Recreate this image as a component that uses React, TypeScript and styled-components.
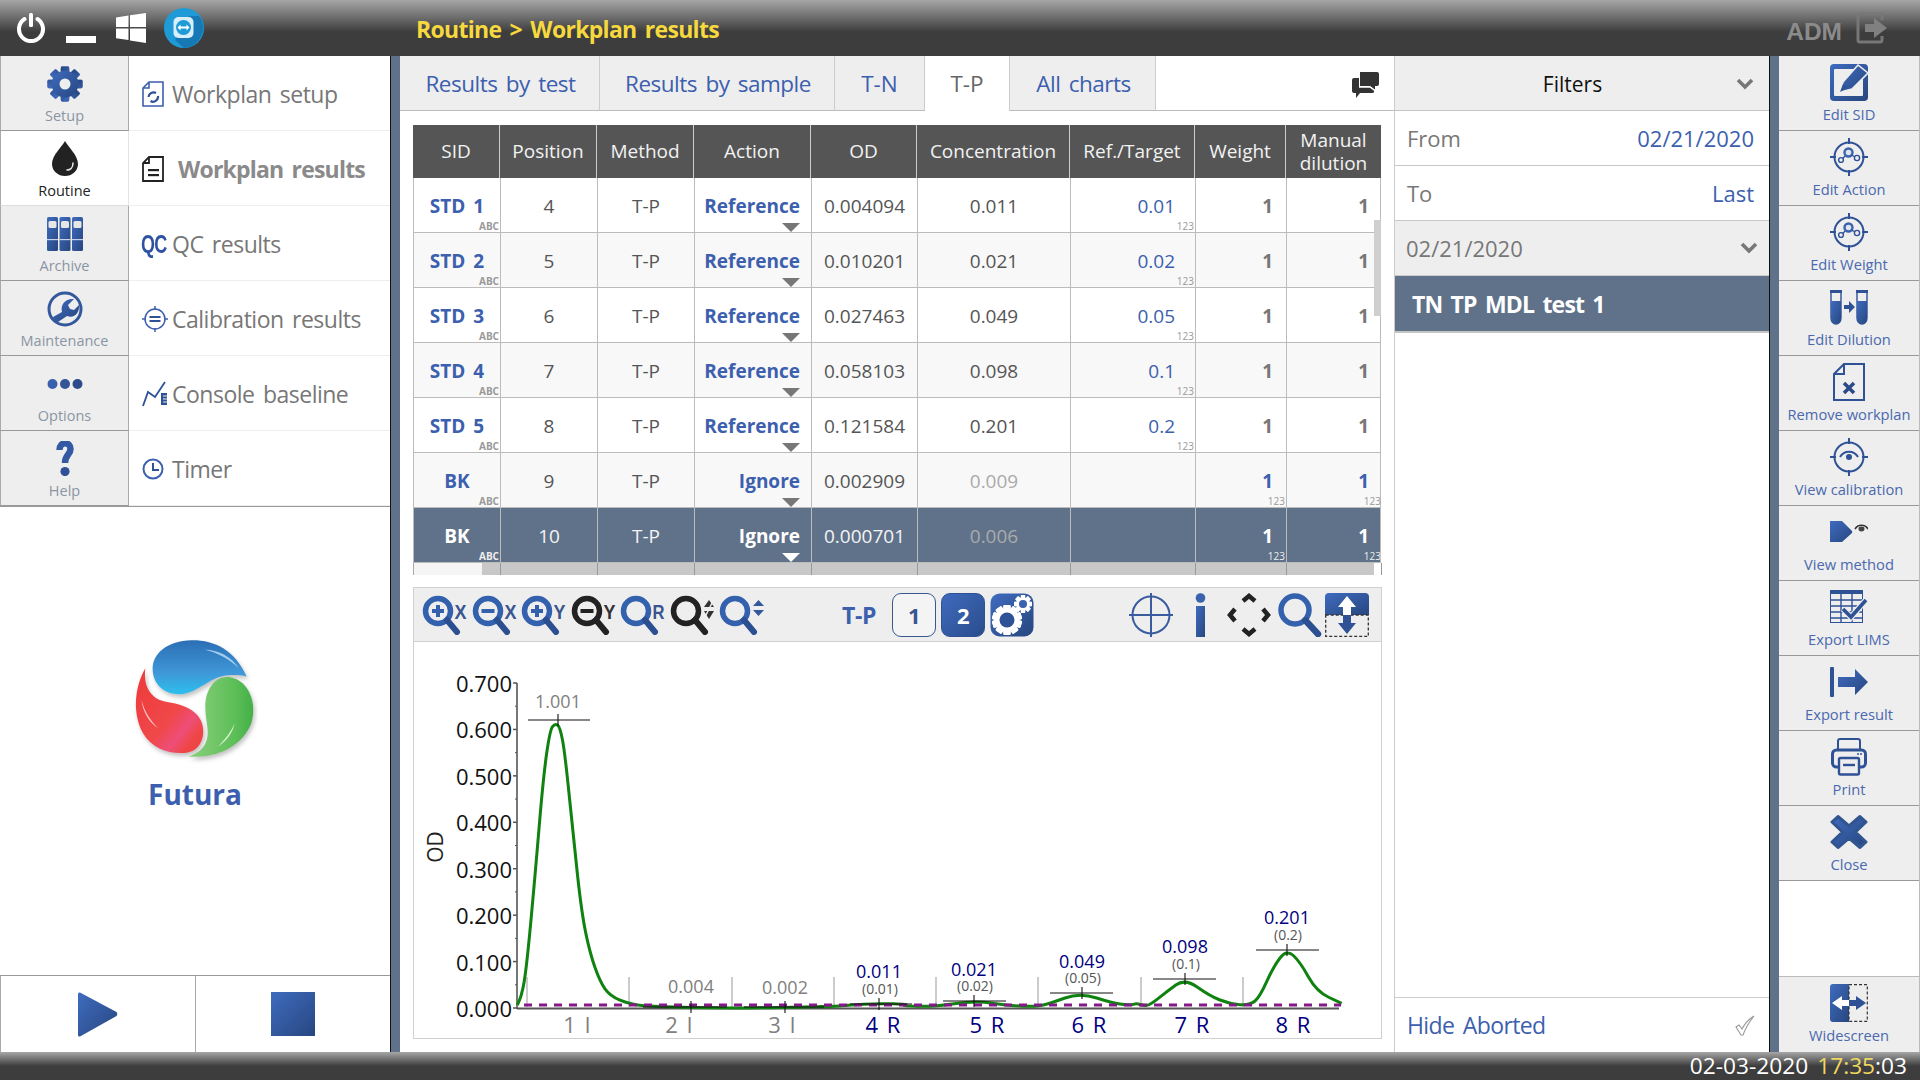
import React from "react";
import styled, { createGlobalStyle } from "styled-components";

const FONT = `"Open Sans", "Noto Sans", sans-serif`;
const BLUE = "#3c5fae";
const GRAD = "url(#blueGrad)";
const COLS = "87px 97px 97px 117px 106px 153px 125px 91px 95px";

const GlobalStyle = createGlobalStyle`
  html, body { margin: 0; padding: 0; background: #fff; }
  body { font-family: ${FONT}; }
  * { box-sizing: border-box; }
`;

const Page = styled.div`
  width: 1920px;
  height: 1080px;
  display: flex;
  flex-direction: column;
  overflow: hidden;
  position: relative;
`;

const GradDefs = styled.svg`
  position: absolute;
  width: 0;
  height: 0;
`;

const TopBar = styled.header`
  height: 56px;
  flex: none;
  display: flex;
  align-items: center;
  padding: 0 32px 0 16px;
  background: linear-gradient(#a6a6a6 0, #3d3d3d 32px, #3d3d3d 100%);
`;

const TopIcons = styled.div`
  display: flex;
  align-items: center;
  gap: 20px;
  width: 400px;
  svg:last-child { margin-left: -3px; }
`;

const Title = styled.div`
  color: #f6d83f;
  font-size: 23px;
  font-weight: 700;
  letter-spacing: -0.7px;
  word-spacing: 3px;
  flex: 1;
  margin-top: 2px;
`;

const AdmGroup = styled.div`
  display: flex;
  align-items: center;
  gap: 14px;
  color: #8b8b8b;
  font: 700 24.5px "Liberation Sans", sans-serif;
`;

const AdmLabel = styled.span`
  margin-top: 7px;
`;

const Body = styled.div`
  flex: 1;
  min-height: 0;
  display: flex;
`;

const LeftPane = styled.aside`
  width: 390px;
  flex: none;
  display: flex;
  flex-direction: column;
`;

const NavGrid = styled.nav`
  display: grid;
  grid-template-columns: 129px 261px;
  grid-auto-rows: 75px;
  border-bottom: 1px solid #999;
`;

const NavTab = styled.div<{ $active?: boolean }>`
  display: flex;
  flex-direction: column;
  align-items: center;
  background: ${(p) => (p.$active ? "#fff" : "#eee")};
  border: 1px solid #aaa;
  border-width: 0 1px 1px 1px;
  border-bottom-color: ${(p) => (p.$active ? "#ddd" : "#999")};
  border-right-color: ${(p) => (p.$active ? "#e4e4e4" : "#aaa")};
  color: ${(p) => (p.$active ? "#222" : "#8a95a3")};
  font-size: 14.5px;
`;

const NavIconSlot = styled.div`
  height: 45px;
  display: flex;
  align-items: center;
  justify-content: center;
  margin-top: 5px;
`;

const NavLabel = styled.span`
  line-height: 20px;
`;

const SubItem = styled.div<{ $active?: boolean }>`
  display: flex;
  align-items: center;
  padding: 2px 0 0 14px;
  border-bottom: 1px solid #eee;
  color: ${(p) => (p.$active ? "#8a8a8a" : "#777")};
  font-size: 23px;
  font-weight: ${(p) => (p.$active ? 700 : 400)};
  letter-spacing: ${(p) => (p.$active ? "-0.8px" : "-0.5px")};
  word-spacing: 3px;
`;

const SubIcon = styled.span<{ $active?: boolean }>`
  width: ${(p) => (p.$active ? "36px" : "30px")};
  flex: none;
  display: flex;
  align-items: center;
  margin-left: -1px;
`;

const QcMark = styled.span`
  font: 700 25px "Liberation Sans", sans-serif;
  letter-spacing: -1px;
  color: #2f52a0;
  transform: scaleX(0.72);
  transform-origin: left center;
  margin-left: -1px;
`;

const Brand = styled.div`
  flex: 1;
  display: flex;
  flex-direction: column;
  align-items: center;
  padding-top: 131px;
  color: ${BLUE};
  font-size: 28px;
  font-weight: 700;
`;

const BrandName = styled.div`
  margin-top: 10px;
`;

const RunBar = styled.div`
  height: 77px;
  flex: none;
  display: grid;
  grid-template-columns: 195px 195px;
  border-top: 1px solid #999;
`;

const RunButton = styled.div`
  display: flex;
  align-items: flex-start;
  justify-content: center;
  padding-top: 16px;
  border-left: 1px solid #aaa;
`;

const Divider = styled.div`
  width: 10px;
  flex: none;
  background: #5f728a;
  border-left: 1px solid #111;
`;

const Main = styled.main`
  width: 995px;
  flex: none;
  display: flex;
  flex-direction: column;
  border-right: 1px solid #ccc;
`;

const Tabs = styled.div`
  height: 55px;
  flex: none;
  display: flex;
  align-items: stretch;
`;

const Tab = styled.div<{ $w: number; $active?: boolean; $short?: boolean }>`
  width: ${(p) => p.$w}px;
  display: flex;
  align-items: center;
  justify-content: center;
  font-size: 22.5px;
  letter-spacing: ${(p) => (p.$short ? "0" : "-0.5px")};
  word-spacing: 3px;
  padding-left: ${(p) => (p.$short ? "0" : "2px")};
  color: ${(p) => (p.$active ? "#666" : BLUE)};
  background: ${(p) => (p.$active ? "#fff" : "#eee")};
  border-right: 1px solid #ccc;
  border-bottom: ${(p) => (p.$active ? "none" : "1px solid #bbb")};
`;

const TabFill = styled.div`
  flex: 1;
  display: flex;
  align-items: center;
  justify-content: flex-end;
  padding: 4px 15px 0 0;
  border-bottom: 1px solid #bbb;
`;

const Content = styled.div`
  flex: 1;
  min-height: 0;
  display: flex;
  flex-direction: column;
  padding: 14px 13px 13px 13px;
`;

const ResultTable = styled.div`
  position: relative;
  width: 968px;
  flex: none;
`;

const HeadRow = styled.div`
  display: grid;
  grid-template-columns: ${COLS};
  height: 53px;
  background: #555;
`;

const HeadCell = styled.div`
  display: flex;
  align-items: center;
  justify-content: center;
  text-align: center;
  color: #f2f2f2;
  font-size: 19px;
  line-height: 23px;
  border-right: 1px solid #ccc;
  &:last-child { border-right: none; }
`;

const Row = styled.div<{ $selected?: boolean; $alt?: boolean }>`
  display: grid;
  grid-template-columns: ${COLS};
  height: 55px;
  font-size: 19px;
  background: ${(p) => (p.$selected ? "#5f728a" : p.$alt ? "#f8f8f8" : "#fff")};
  color: ${(p) => (p.$selected ? "#f4f4f4" : "#555")};
  border-bottom: 1px solid #bcbcbc;
  border-left: 1px solid #bcbcbc;
  border-right: 1px solid #bcbcbc;
`;

const Cell = styled.div<{ $align?: string; $pad?: number; $tone?: string; $bold?: boolean }>`
  position: relative;
  display: flex;
  align-items: center;
  justify-content: ${(p) => p.$align || "center"};
  padding: 2px ${(p) => p.$pad || 0}px 0 ${(p) => p.$pad || 0}px;
  border-right: 1px solid #bcbcbc;
  color: ${(p) => p.$tone || "inherit"};
  font-weight: ${(p) => (p.$bold ? 700 : 400)};
  word-spacing: 3px;
  &:last-child { border-right: none; }
`;

const CornerTag = styled.span<{ $bold?: boolean; $tone?: string }>`
  position: absolute;
  right: 1px;
  bottom: 0;
  font-size: 10px;
  line-height: 11px;
  font-weight: ${(p) => (p.$bold ? 700 : 400)};
  color: ${(p) => p.$tone || "#999"};
`;

const DropCaret = styled.span<{ $tone?: string }>`
  position: absolute;
  right: 11px;
  bottom: 0;
  width: 0;
  height: 0;
  border-left: 9px solid transparent;
  border-right: 9px solid transparent;
  border-top: 9px solid ${(p) => p.$tone || "#777"};
`;

const VScrollThumb = styled.div`
  position: absolute;
  top: 95px;
  right: 0;
  width: 7px;
  height: 96px;
  background: #cfcfcf;
`;

const HScroll = styled.div`
  position: relative;
  display: grid;
  grid-template-columns: ${COLS};
  height: 12px;
  width: 968px;
  background: #c8c8c8;
  border-left: 1px solid #aaa;
  flex: none;
`;

const HScrollCell = styled.div`
  border-right: 1px solid #999;
  &:last-child { border-right: none; }
`;

const HThumb = styled.div`
  position: absolute;
  left: 0;
  top: 0;
  width: 68px;
  height: 12px;
  background: #f5f5f5;
`;

const HCorner = styled.div`
  position: absolute;
  right: 0;
  top: 0;
  width: 7px;
  height: 12px;
  background: #fff;
`;

const ChartTools = styled.div`
  margin-top: 12px;
  height: 55px;
  flex: none;
  width: 969px;
  display: flex;
  align-items: center;
  padding-left: 8px;
  background: #eee;
  border: 1px solid #d0d0d0;
`;

const ToolGroup = styled.div<{ $gap: number; $ml?: number }>`
  display: flex;
  align-items: center;
  gap: ${(p) => p.$gap}px;
  margin-left: ${(p) => p.$ml || 0}px;
`;

const ToolSlot = styled.div<{ $ml: number }>`
  display: flex;
  margin-left: ${(p) => p.$ml}px;
`;

const SeriesName = styled.span`
  color: ${BLUE};
  font-size: 23px;
  font-weight: 700;
  letter-spacing: -0.3px;
  margin-right: 11px;
`;

const SeriesButton = styled.div<{ $on?: boolean }>`
  width: 44px;
  height: 44px;
  display: flex;
  align-items: center;
  justify-content: center;
  border-radius: 9px;
  font-size: 22px;
  font-weight: 700;
  color: ${(p) => (p.$on ? "#fff" : "#37568f")};
  background: ${(p) => (p.$on ? "linear-gradient(135deg, #3f6bbd, #2a4c8c)" : "#f4f4f4")};
  border: 1px solid ${(p) => (p.$on ? "#2f5296" : "#38588f")};
`;

const ChartBox = styled.div`
  flex: none;
  width: 969px;
  height: 397px;
  border: 1px solid #d0d0d0;
  border-top: none;
  background: #fff;
`;

const ChartSvg = styled.svg`
  display: block;
  width: 967px;
  height: 396px;
`;

const FilterPane = styled.section`
  width: 374px;
  flex: none;
  display: flex;
  flex-direction: column;
`;

const FilterHead = styled.div`
  height: 55px;
  flex: none;
  display: flex;
  align-items: center;
  padding: 2px 15px 0 0;
  background: #eee;
  border-bottom: 1px solid #c4c4c4;
  color: #111;
  font-size: 21px;
`;

const FilterTitle = styled.span`
  flex: 1;
  text-align: center;
  padding-left: 14px;
`;

const FilterRow = styled.div`
  height: 55px;
  flex: none;
  display: flex;
  align-items: center;
  justify-content: space-between;
  padding: 0 15px 0 12px;
  border-bottom: 1px solid #c8c8c8;
  color: #777;
  font-size: 22px;
`;

const FilterValue = styled.span`
  color: ${BLUE};
`;

const DateSelect = styled.div`
  height: 55px;
  flex: none;
  display: flex;
  align-items: center;
  justify-content: space-between;
  padding: 0 11px 0 11px;
  background: #eee;
  color: #777;
  font-size: 22px;
  border-bottom: 1px solid #ccc;
`;

const PlanItem = styled.div`
  height: 57px;
  flex: none;
  display: flex;
  align-items: center;
  padding: 0 0 0 17px;
  background: #5f728a;
  border-bottom: 2px solid #c4c4c4;
  color: #fff;
  font-size: 23px;
  font-weight: 700;
  letter-spacing: -0.8px;
  word-spacing: 3px;
`;

const FilterSpacer = styled.div`
  flex: 1;
`;

const HideRow = styled.div`
  height: 55px;
  flex: none;
  display: flex;
  align-items: center;
  justify-content: space-between;
  padding: 0 14px 0 12px;
  border-top: 1px solid #ccc;
  color: ${BLUE};
  font-size: 23px;
  letter-spacing: -0.6px;
  word-spacing: 3px;
`;

const RightRail = styled.aside`
  flex: 1;
  display: flex;
  flex-direction: column;
  border-right: 1px solid #bbb;
`;

const RailButton = styled.div`
  height: 75px;
  flex: none;
  display: flex;
  flex-direction: column;
  align-items: center;
  background: #eee;
  border-bottom: 1px solid #999;
  color: #4a69ae;
  font-size: 14.7px;
`;

const RailIcon = styled.div`
  height: 44px;
  display: flex;
  align-items: center;
  justify-content: center;
  margin-top: 4px;
`;

const RailLabel = styled.span`
  line-height: 20px;
`;

const RailSpacer = styled.div`
  flex: 1;
`;

const WideButton = styled(RailButton)`
  height: 76px;
  border-bottom: none;
  border-top: 1px solid #bbb;
`;

const BottomBar = styled.footer`
  height: 28px;
  flex: none;
  display: flex;
  align-items: center;
  justify-content: flex-end;
  padding: 0 13px 1px 0;
  background: linear-gradient(#a6a6a6 0, #3d3d3d 14px, #3d3d3d 100%);
  color: #fff;
  font-size: 22.7px;
  line-height: 24px;
`;

const Clock = styled.span`
  color: #f0d860;
  margin-left: 9px;
`;

/* top bar icons */
const PowerIcon = () => (
  <svg width="30" height="30" viewBox="0 0 30 30">
    <path d="M8.5 6 A12 12 0 1 0 21.5 6" fill="none" stroke="#fff" strokeWidth="4" strokeLinecap="round" />
    <rect x="13" y="0" width="4" height="14" rx="1.5" fill="#fff" />
  </svg>
);

const MinimizeIcon = () => (
  <svg width="30" height="30" viewBox="0 0 30 30">
    <rect x="0" y="23" width="30" height="7" fill="#fff" />
  </svg>
);

const WindowsIcon = () => (
  <svg width="30" height="30" viewBox="0 0 30 30">
    <path d="M0 4.5 L12.5 2.5 V14 H0 Z M14 2.2 L30 0 V14 H14 Z M0 15.5 H12.5 V27 L0 25.2 Z M14 15.5 H30 V30 L14 27.4 Z" fill="#fff" />
  </svg>
);

const TeamViewerIcon = () => (
  <svg width="42" height="42" viewBox="0 0 42 42">
    <circle cx="21" cy="21" r="20" fill="#1e9bd7" />
    <path d="M26 9 H36 A20 20 0 0 1 21 41 L12 33 Z" fill="#1678b4" />
    <rect x="10.5" y="10" width="20" height="21" rx="5" fill="#d8eefa" />
    <circle cx="20.5" cy="20.5" r="7.5" fill="#1e9bd7" />
    <path d="M14.5 20.5 L17.5 17.5 V19.5 H23.5 V17.5 L26.5 20.5 L23.5 23.5 V21.5 H17.5 V23.5 Z" fill="#fff" />
  </svg>
);

const ExitIcon = () => (
  <svg width="32" height="32" viewBox="0 0 32 32">
    <path d="M26 8 V4 A2 2 0 0 0 24 2 H4 A2 2 0 0 0 2 4 V28 A2 2 0 0 0 4 30 H24 A2 2 0 0 0 26 28 V24" fill="none" stroke="#777" strokeWidth="3" />
    <path d="M9 12 H18 V6 L31 16 L18 26 V20 H9 Z" fill="#808080" />
  </svg>
);

/* left nav */
const GearShape = ({ cx, cy, r, hole, fill, teeth = 8 }: { cx: number; cy: number; r: number; hole: number; fill: string; teeth?: number }) => (
  <g fill={fill}>
    {Array.from({ length: teeth }).map((_, i) => (
      <rect key={i} x={cx - r * 0.24} y={cy - r} width={r * 0.48} height={r * 2} rx={r * 0.08} transform={`rotate(${(i * 360) / teeth} ${cx} ${cy})`} />
    ))}
    <circle cx={cx} cy={cy} r={r * 0.76} />
    <circle cx={cx} cy={cy} r={hole} fill="#eee" />
  </g>
);

const SetupIcon = () => (
  <svg width="36" height="36" viewBox="0 0 36 36">
    <GearShape cx={18} cy={18} r={17.5} hole={5.5} fill={GRAD} />
  </svg>
);

const DropIcon = () => (
  <svg width="26" height="35" viewBox="0 0 26 35">
    <path d="M13 0 C16 6 26 14 26 23 A13 12 0 0 1 0 23 C0 14 10 6 13 0 Z" fill="#222" />
    <path d="M21 22 C21 27 18 29 15 29" fill="none" stroke="#eee" strokeWidth="1.5" strokeLinecap="round" />
  </svg>
);

const ArchiveIcon = () => (
  <svg width="36" height="34" viewBox="0 0 36 34">
    {[0, 12.5, 25].map((x) => (
      <g key={x}>
        <rect x={x} y="0" width="11" height="34" rx="1.5" fill={GRAD} />
        <rect x={x + 1.5} y="4" width="8" height="7" rx="1.5" fill="#e6e6e6" />
        <rect x={x} y="22" width="11" height="1.2" fill="#c8d2e6" />
      </g>
    ))}
  </svg>
);

const WrenchIcon = () => (
  <svg width="36" height="36" viewBox="0 0 36 36">
    <circle cx="18" cy="18" r="16" fill="none" stroke="#34589c" strokeWidth="3" />
    <path d="M6 26 L15 21 C13 13 19 7 27 8 L21 14 L23 18 L27 19 L32 14 C33 22 27 28 20 25 L11 31 C8 30 7 28 6 26 Z" fill={GRAD} />
  </svg>
);

const DotsIcon = () => (
  <svg width="36" height="12" viewBox="0 0 36 12">
    <circle cx="5.5" cy="6" r="5" fill="#3a60ad" />
    <circle cx="18" cy="6" r="5" fill="#345597" />
    <circle cx="30.5" cy="6" r="5" fill="#2c4b8a" />
  </svg>
);

const HelpIcon = () => (
  <svg width="18" height="35" viewBox="0 0 18 35">
    <path d="M3.5 9 C3.5 0 14.5 0.5 14.5 8 C14.5 13.5 9 14 9 22" fill="none" stroke="#3359a3" strokeWidth="6.5" />
    <circle cx="9" cy="30.5" r="4.6" fill="#2f5296" />
  </svg>
);

const SetupDocIcon = () => (
  <svg width="22" height="26" viewBox="0 0 22 26">
    <path d="M7 1 H21 V25 H1 V7 Z M7 1 V7 H1" fill="#fff" stroke="#3c5fae" strokeWidth="1.6" />
    <path d="M6.5 16 A5 5 0 0 1 14 12 M16 15 A5 5 0 0 1 8.5 20" fill="none" stroke="#2f5296" strokeWidth="2.2" />
  </svg>
);

const ResultDocIcon = () => (
  <svg width="22" height="26" viewBox="0 0 22 26">
    <path d="M7 1 H21 V25 H1 V7 Z M7 1 V7 H1" fill="#fff" stroke="#222" strokeWidth="1.8" />
    <rect x="6" y="13" width="11" height="2.2" fill="#222" />
    <rect x="6" y="18" width="11" height="2.2" fill="#222" />
  </svg>
);

const CalibrationIcon = () => (
  <svg width="26" height="26" viewBox="0 0 26 26">
    <circle cx="13" cy="13" r="10" fill="none" stroke="#3c5fae" strokeWidth="1.5" />
    <path d="M13 0 V4 M13 22 V26 M0 13 H4 M22 13 H26" stroke="#3c5fae" strokeWidth="1.5" />
    <rect x="7.5" y="10" width="11" height="2" fill="#2f5296" />
    <rect x="7.5" y="14" width="11" height="2" fill="#2f5296" />
  </svg>
);

const BaselineIcon = () => (
  <svg width="26" height="26" viewBox="0 0 26 26">
    <path d="M1 25 L6 11 L13 16 L23 1" fill="none" stroke="#2f5296" strokeWidth="1.8" />
    <rect x="19" y="12" width="6" height="12" fill="#2f5296" />
    <path d="M21 15 H25 M21 18 H25 M21 21 H25" stroke="#eee" strokeWidth="1" />
  </svg>
);

const ClockIcon = () => (
  <svg width="22" height="22" viewBox="0 0 22 22">
    <circle cx="11" cy="11" r="9.5" fill="none" stroke="#3c5fae" strokeWidth="2" />
    <path d="M11 5 V12 H17" fill="none" stroke="#2f5296" strokeWidth="2" />
  </svg>
);

const FuturaLogo = () => (
  <svg width="125" height="127" viewBox="395 115 375 380">
    <defs>
      <linearGradient id="lgBlue" x1="0" y1="0" x2="0" y2="1">
        <stop offset="0" stopColor="#2b6eb4" />
        <stop offset="0.6" stopColor="#3f97d8" />
        <stop offset="1" stopColor="#2cc0ee" />
      </linearGradient>
      <linearGradient id="lgRed" x1="0" y1="0" x2="1" y2="1">
        <stop offset="0" stopColor="#ee3a3a" />
        <stop offset="0.55" stopColor="#f0474a" />
        <stop offset="0.72" stopColor="#ee4f78" />
        <stop offset="0.85" stopColor="#f04545" />
      </linearGradient>
      <linearGradient id="lgGreen" x1="0" y1="0" x2="1" y2="0">
        <stop offset="0" stopColor="#8ccf7e" />
        <stop offset="0.7" stopColor="#5ebf58" />
        <stop offset="1" stopColor="#44b048" />
      </linearGradient>
      <filter id="lgShadow" x="-10%" y="-10%" width="125%" height="125%">
        <feDropShadow dx="5" dy="9" stdDeviation="6" floodColor="#777" floodOpacity="0.45" />
      </filter>
    </defs>
    <g filter="url(#lgShadow)">
      <path d="M736 230 C700 150 640 120 570 121 C500 122 452 160 454 210 C456 262 500 287 540 283 C590 278 630 228 680 226 C705 225 722 226 736 230 Z" fill="url(#lgBlue)" />
      <path d="M432 205 C400 260 392 340 425 400 C455 450 510 465 560 458 C600 450 615 405 600 365 C582 322 530 312 490 305 C450 295 425 262 432 205 Z" fill="url(#lgRed)" />
      <path d="M562 470 C640 475 720 445 750 370 C768 315 745 240 685 232 C640 228 612 270 612 320 C612 370 630 400 610 435 C600 452 585 462 562 470 Z" fill="url(#lgGreen)" />
    </g>
    <path d="M610 150 C650 150 690 170 712 205 C680 175 650 160 610 150 Z" fill="#bfe0f6" opacity="0.8" />
    <path d="M420 300 C425 335 440 365 470 385 C445 360 430 335 420 300 Z" fill="#ffd6d6" opacity="0.9" />
    <path d="M650 440 C680 420 695 395 700 370 C690 395 670 420 650 440 Z" fill="#e6f7e0" opacity="0.9" />
  </svg>
);

const PlayIcon = () => (
  <svg width="40" height="45" viewBox="0 0 40 45">
    <path d="M2 0.5 L38.5 20 Q40 22 38.5 24 L2 44.5 Q0 45 0 43 V2 Q0 0 2 0.5 Z" fill={GRAD} />
  </svg>
);

const StopIcon = () => (
  <svg width="44" height="44" viewBox="0 0 44 44">
    <rect width="44" height="44" fill={GRAD} />
  </svg>
);

const ChatIcon = () => (
  <svg width="27" height="27" viewBox="0 0 27 27">
    <path d="M8 0 H25 Q27 0 27 2 V12 Q27 14 25 14 H23 V18 L18 14 H8 Z" fill="#333" />
    <path d="M2 6 H7 V15 H18 L22 18 V20 Q22 21 20 21 H8 L4 26 V21 H2 Q0 21 0 19 V8 Q0 6 2 6 Z" fill="#333" />
    <path d="M7 15 H18 L23 18.6" fill="none" stroke="#fff" strokeWidth="1.4" />
  </svg>
);

/* chart toolbar */
const ZoomIcon = ({ mark, letter, dark }: { mark?: "+" | "-"; letter?: string; dark?: boolean }) => {
  const c = dark ? "#222" : "#3461ad";
  return (
    <svg width="46" height="40" viewBox="0 0 46 40">
      <circle cx="16" cy="16" r="12.5" fill="#eee" stroke={c} strokeWidth="5.5" />
      <path d="M25 25 L35 37" stroke={dark ? "#222" : "#2b4f90"} strokeWidth="6" strokeLinecap="round" />
      {mark === "+" && <path d="M10 16 H22 M16 10 V22" stroke={c} strokeWidth="4" />}
      {mark === "-" && <path d="M9.5 16 H22.5" stroke={c} strokeWidth="4" />}
      {letter && (
        <text x="38.5" y="24" textAnchor="middle" fontSize="20" fontWeight="700" fontFamily={'"Liberation Sans", sans-serif'} fill={dark ? "#333" : "#3a5590"} textLength="12" lengthAdjust="spacingAndGlyphs">
          {letter}
        </text>
      )}
    </svg>
  );
};

const LinkedZoomIcon = () => (
  <svg width="46" height="40" viewBox="0 0 46 40">
    <circle cx="16" cy="16" r="12.5" fill="#eee" stroke="#222" strokeWidth="5.5" />
    <path d="M25 25 L35 37" stroke="#222" strokeWidth="6" strokeLinecap="round" />
    <path d="M34 12 L39 5 L44 12 Z M34 16 L44 16 L39 24 Z" fill="#333" />
    <path d="M35 22 L44 4" stroke="#eee" strokeWidth="1.5" />
  </svg>
);

const SortZoomIcon = () => (
  <svg width="46" height="40" viewBox="0 0 46 40">
    <circle cx="16" cy="16" r="12.5" fill="#eee" stroke="#3461ad" strokeWidth="5.5" />
    <path d="M25 25 L35 37" stroke="#2b4f90" strokeWidth="6" strokeLinecap="round" />
    <path d="M34 11 L39.5 5 L45 11 Z M34 15 L45 15 L39.5 21 Z" fill="#34589c" />
  </svg>
);

const GearsButton = () => (
  <svg width="44" height="44" viewBox="0 0 44 44">
    <rect x="0.5" y="0.5" width="43" height="43" rx="9" fill={GRAD} />
    <g>
      <GearShape cx={17} cy={27} r={15} hole={7.5} fill="#fff" teeth={10} />
      <circle cx={17} cy={27} r={7.5} fill="#2f5296" />
      <GearShape cx={33} cy={11} r={9} hole={4} fill="#fff" teeth={8} />
      <circle cx={33} cy={11} r={4} fill="#3a62ad" />
    </g>
  </svg>
);

const CrosshairIcon = () => (
  <svg width="44" height="44" viewBox="0 0 44 44">
    <circle cx="22" cy="22" r="18.5" fill="none" stroke="#3a5c9f" strokeWidth="2" />
    <path d="M22 0 V44 M0 22 H44" stroke="#3a5c9f" strokeWidth="2" />
  </svg>
);

const InfoIcon = () => (
  <svg width="11" height="44" viewBox="0 0 11 44">
    <circle cx="5.5" cy="5" r="4.8" fill="#3a62ad" />
    <rect x="1" y="13" width="9" height="31" fill={GRAD} />
  </svg>
);

const PanIcon = () => (
  <svg width="44" height="44" viewBox="0 0 44 44">
    <path d="M16 8 L22 3 L28 8 M16 36 L22 41 L28 36 M8 16 L3 22 L8 28 M36 16 L41 22 L36 28" fill="none" stroke="#222" strokeWidth="4.5" />
  </svg>
);

const SearchIcon = () => (
  <svg width="44" height="44" viewBox="0 0 44 44">
    <circle cx="17" cy="17" r="14" fill="#eee" stroke="#3461ad" strokeWidth="5.5" />
    <path d="M27.5 27.5 L40 41" stroke="#2b4f90" strokeWidth="6.5" strokeLinecap="round" />
  </svg>
);

const ExpandIcon = () => (
  <svg width="44" height="44" viewBox="0 0 44 44">
    <path d="M4 0 H40 Q44 0 44 4 V22 H0 V4 Q0 0 4 0 Z" fill={GRAD} />
    <rect x="0.7" y="22" width="42.6" height="21.3" fill="none" stroke="#333" strokeWidth="1.3" strokeDasharray="3 2" />
    <path d="M22 3 L31 14 H26 V22 H18 V14 H13 Z" fill="#fff" />
    <path d="M22 41 L31 30 H26 V22 H18 V30 H13 Z" fill="#2f5296" />
  </svg>
);

/* right rail */
const EditSidIcon = () => (
  <svg width="38" height="38" viewBox="0 0 38 38">
    <rect x="0" y="1" width="38" height="37" rx="4" fill={GRAD} />
    <rect x="4" y="6" width="29" height="27" rx="1" fill="#eee" />
    <path d="M10 29 L13 19 L28 2 L38 10 L22 26 Z" fill={GRAD} stroke="#eee" strokeWidth="1.6" />
    <path d="M10 29 L13 21 L18 25 Z" fill="#2f5296" />
  </svg>
);

const TargetRing = () => (
  <>
    <circle cx="19" cy="19" r="14.5" fill="none" stroke="#2f5296" strokeWidth="2" />
    <path d="M19 0 V6 M19 32 V38 M0 19 H6 M32 19 H38" stroke="#2f5296" strokeWidth="2" />
  </>
);

const EditTargetIcon = () => (
  <svg width="38" height="38" viewBox="0 0 38 38">
    <TargetRing />
    <circle cx="18.5" cy="14.5" r="4" fill="#dfe5ee" stroke="#3a62ad" strokeWidth="2.4" />
    <circle cx="27" cy="20" r="2.6" fill="none" stroke="#2f5296" strokeWidth="1.4" />
    <circle cx="11" cy="22" r="2.4" fill="none" stroke="#2f5296" strokeWidth="1.4" />
    <path d="M21.5 17 L25 19 M15 18 L12.8 20.5" stroke="#2f5296" strokeWidth="1.3" />
  </svg>
);

const Tube = ({ x }: { x: number }) => (
  <g>
    <rect x={x} y="0" width="12" height="3" fill="#2f5296" />
    <path d={`M${x + 1} 3 V28 A5 6 0 0 0 ${x + 11} 28 V3`} fill="#eee" stroke="#2f5296" strokeWidth="1.4" />
    <path d={`M${x + 1} 11 H${x + 11} V28 A5 6 0 0 1 ${x + 1} 28 Z`} fill={GRAD} />
  </g>
);

const DilutionIcon = () => (
  <svg width="38" height="35" viewBox="0 0 38 35">
    <Tube x={0} />
    <Tube x={26} />
    <path d="M14 15 H19 V11 L25 17 L19 23 V19 H14 Z" fill="#2f5296" />
  </svg>
);

const RemoveDocIcon = () => (
  <svg width="32" height="38" viewBox="0 0 32 38">
    <path d="M11 1 H31 V37 H1 V11 Z M11 1 V11 H1" fill="#eee" stroke="#2f5296" strokeWidth="2" />
    <path d="M11 20 L21 30 M21 20 L11 30" stroke="#2a4a88" strokeWidth="3.5" />
  </svg>
);

const EyeTargetIcon = () => (
  <svg width="38" height="38" viewBox="0 0 38 38">
    <TargetRing />
    <path d="M10 19 C14 12 24 12 28 19" fill="none" stroke="#2f5296" strokeWidth="2" />
    <circle cx="19" cy="19" r="3" fill="#2f5296" />
  </svg>
);

const MethodIcon = () => (
  <svg width="38" height="22" viewBox="0 0 38 22">
    <path d="M0 0 H12 L22 10 Q22.5 11 22 12 L12 21 H0 Z" fill={GRAD} />
    <path d="M25 8 C28 3 35 3 38 8" fill="none" stroke="#333" strokeWidth="1.6" />
    <ellipse cx="31.5" cy="8" rx="3" ry="2.4" fill="#444" />
  </svg>
);

const LimsIcon = () => (
  <svg width="38" height="34" viewBox="0 0 38 34">
    <rect x="0.5" y="0.5" width="32" height="32" fill="#eee" stroke="#2f5296" />
    <rect x="0" y="0" width="33" height="4" fill="#2f5296" />
    <path d="M0 10 H33 M0 16 H33 M0 22 H33 M0 28 H33 M11 0 V33 M22 0 V33" stroke="#2f5296" strokeWidth="1.4" />
    <path d="M13 19 L21 27 L36 10" fill="none" stroke="#eee" strokeWidth="6" />
    <path d="M13 19 L21 27 L36 10" fill="none" stroke="#2f5296" strokeWidth="3.6" />
  </svg>
);

const ExportIcon = () => (
  <svg width="38" height="30" viewBox="0 0 38 30">
    <rect x="0" y="0" width="4" height="30" rx="1" fill="#2f5296" />
    <path d="M8 10 H25 V2 L38 15 L25 28 V20 H8 Z" fill={GRAD} />
  </svg>
);

const PrintIcon = () => (
  <svg width="36" height="38" viewBox="0 0 36 38">
    <path d="M7 12 V3 Q7 1 9 1 H27 Q29 1 29 3 V12" fill="#eee" stroke="#2f5296" strokeWidth="2" />
    <rect x="1.5" y="12" width="33" height="17" rx="4" fill="#eee" stroke="#2f5296" strokeWidth="3" />
    <rect x="8" y="20" width="20" height="16.5" rx="1.5" fill="#eee" stroke="#2f5296" strokeWidth="2.4" />
    <path d="M12 27 H24" stroke="#2f5296" strokeWidth="2.4" />
    <circle cx="27" cy="16" r="1" fill="#2f5296" />
    <circle cx="30" cy="16" r="1" fill="#2f5296" />
  </svg>
);

const CloseIcon = () => (
  <svg width="38" height="36" viewBox="0 0 38 36">
    <path d="M8 2.5 L19 12 L30 2.5 L36 8 L25.5 18 L36 28 L30 33.5 L19 24 L8 33.5 L2 28 L12.5 18 L2 8 Z" fill={GRAD} stroke="#31558f" strokeWidth="3" strokeLinejoin="round" />
  </svg>
);

const WideIcon = () => (
  <svg width="38" height="38" viewBox="0 0 38 38">
    <path d="M3 0 H19 V38 H3 Q0 38 0 35 V3 Q0 0 3 0 Z" fill={GRAD} />
    <rect x="19" y="0.7" width="18.3" height="36.6" fill="none" stroke="#333" strokeWidth="1.2" strokeDasharray="3 2" />
    <path d="M2 19 L12 12 V16 H19 V22 H12 V26 Z" fill="#fff" />
    <path d="M36 19 L26 12 V16 H19 V22 H26 V26 Z" fill="#2f5296" />
  </svg>
);

const Chevron = () => (
  <svg width="18" height="12" viewBox="0 0 18 12">
    <path d="M2 2 L9 9 L16 2" fill="none" stroke="#777" strokeWidth="3.6" />
  </svg>
);

const CheckOutline = () => (
  <svg width="20" height="21" viewBox="0 0 20 21">
    <path d="M1 12 L4 10 L7 14 C10 8 14 4 19 1 C15 6 11 12 8 20 L6 20 Z" fill="#fff" stroke="#999" strokeWidth="1.1" />
  </svg>
);

/* chart data, in page pixels */
const smooth = (pts: number[][]) => {
  let d = `M${pts[0][0]} ${pts[0][1]}`;
  for (let i = 1; i < pts.length - 1; i++) {
    const mx = (pts[i][0] + pts[i + 1][0]) / 2;
    const my = (pts[i][1] + pts[i + 1][1]) / 2;
    d += ` Q${pts[i][0]} ${pts[i][1]} ${mx} ${my}`;
  }
  const last = pts[pts.length - 1];
  return d + ` L${last[0]} ${last[1]}`;
};

const peak = [
  [322, 1035], [335, 1010], [350, 920], [375, 650], [400, 350], [420, 210], [435, 190], [450, 200], [465, 280],
  [490, 530], [515, 760], [540, 880], [570, 965], [600, 1008], [660, 1033], [730, 1040], [960, 1045], [1270, 1040],
  [1320, 1035], [1400, 1030], [1500, 1033],
].map(([x, y]) => [410 + x / 3, 660 + y / 3]);

const tail = [
  [0, 437], [100, 440], [225, 422], [330, 437], [410, 440], [450, 430], [540, 398], [640, 430], [690, 436], [710, 430],
  [730, 437], [750, 435], [800, 395], [855, 355], [930, 408], [990, 432], [1050, 436], [1080, 410], [1120, 320],
  [1160, 268], [1200, 305], [1250, 395], [1325, 430],
].map(([x, y]) => [900 + x / 3, 860 + y / 3]);

const curvePath = smooth([...peak, ...tail]);

const yTicks = ["0.700", "0.600", "0.500", "0.400", "0.300", "0.200", "0.100", "0.000"];
const separators = [527, 629, 732, 834, 936, 1038, 1141, 1243];
const xLabels = [
  { x: 577, t: "1 I", c: "#808080" },
  { x: 679, t: "2 I", c: "#808080" },
  { x: 782, t: "3 I", c: "#808080" },
  { x: 883, t: "4 R", c: "#000080" },
  { x: 987, t: "5 R", c: "#000080" },
  { x: 1089, t: "6 R", c: "#000080" },
  { x: 1192, t: "7 R", c: "#000080" },
  { x: 1293, t: "8 R", c: "#000080" },
];
const marks = [
  { x: 558, y: 720, val: "1.001", vy: 708, grey: true, x0: 528, x1: 590 },
  { x: 691, y: 1007, val: "0.004", vy: 993, grey: true, x0: 643, x1: 727 },
  { x: 785, y: 1007, val: "0.002", vy: 994, grey: true, x0: 744, x1: 824 },
  { x: 879, y: 1004, val: "0.011", vy: 978, ref: "(0.01)", ry: 994, x0: 850, x1: 912 },
  { x: 974, y: 1001, val: "0.021", vy: 976, ref: "(0.02)", ry: 991, x0: 943, x1: 1006 },
  { x: 1082, y: 993, val: "0.049", vy: 968, ref: "(0.05)", ry: 983, x0: 1050, x1: 1113 },
  { x: 1185, y: 979, val: "0.098", vy: 953, ref: "(0.1)", ry: 969, x0: 1153, x1: 1216 },
  { x: 1287, y: 950, val: "0.201", vy: 924, ref: "(0.2)", ry: 940, x0: 1256, x1: 1319 },
];

const OdChart = () => (
  <ChartSvg viewBox="414 642 967 396" fontFamily={FONT}>
    {yTicks.map((t, i) => {
      const y = 683 + i * 46.43;
      return (
        <g key={t}>
          <text x="512" y={y + 9} textAnchor="end" fontSize="22" fill="#111">{t}</text>
          <path d={`M513 ${y} H517`} stroke="#555" strokeWidth="1.5" />
          {i < 7 && <path d={`M515 ${y + 23.2} H517`} stroke="#555" strokeWidth="1" />}
        </g>
      );
    })}
    <text textAnchor="middle" fontSize="21" fill="#222" transform="translate(443 847) rotate(-90)">OD</text>
    <path d="M517 683 V1009" stroke="#555" strokeWidth="1.6" />
    {separators.map((x) => (
      <path key={x} d={`M${x} 977 V1007`} stroke="#ccc" strokeWidth="2" />
    ))}
    <path d="M517 1008.5 H1339" stroke="#555" strokeWidth="2" />
    <path d={curvePath} fill="none" stroke="#0f820f" strokeWidth="3" />
    <path d="M524 1005 H1341" stroke="#86198a" strokeWidth="3" strokeDasharray="8 7" />
    {marks.map((m) => (
      <g key={m.val}>
        <path d={`M${m.x0} ${m.y} H${m.x1} M${m.x} ${m.y - 6} V${m.y + 6}`} stroke="#111" strokeWidth="1.1" />
        <text x={m.x} y={m.vy} textAnchor="middle" fontSize="18" fill={m.grey ? "#808080" : "#000080"}>{m.val}</text>
        {m.ref && (
          <text x={m.x + 1} y={m.ry} textAnchor="middle" fontSize="14" fill="#555">{m.ref}</text>
        )}
      </g>
    ))}
    {xLabels.map((l) => (
      <text key={l.t} x={l.x} y="1033" textAnchor="middle" fontSize="22" wordSpacing="3" fill={l.c}>{l.t}</text>
    ))}
  </ChartSvg>
);

const navItems = [
  { label: "Setup", icon: <SetupIcon />, sub: "Workplan setup", subIcon: <SetupDocIcon /> },
  { label: "Routine", icon: <DropIcon />, sub: "Workplan results", subIcon: <ResultDocIcon />, active: true },
  { label: "Archive", icon: <ArchiveIcon />, sub: "QC results", subIcon: <QcMark>QC</QcMark> },
  { label: "Maintenance", icon: <WrenchIcon />, sub: "Calibration results", subIcon: <CalibrationIcon /> },
  { label: "Options", icon: <DotsIcon />, sub: "Console baseline", subIcon: <BaselineIcon /> },
  { label: "Help", icon: <HelpIcon />, sub: "Timer", subIcon: <ClockIcon /> },
];

const headers = ["SID", "Position", "Method", "Action", "OD", "Concentration", "Ref./Target", "Weight", "Manual dilution"];

const rows = [
  { sid: "STD 1", pos: "4", action: "Reference", od: "0.004094", conc: "0.011", ref: "0.01" },
  { sid: "STD 2", pos: "5", action: "Reference", od: "0.010201", conc: "0.021", ref: "0.02" },
  { sid: "STD 3", pos: "6", action: "Reference", od: "0.027463", conc: "0.049", ref: "0.05" },
  { sid: "STD 4", pos: "7", action: "Reference", od: "0.058103", conc: "0.098", ref: "0.1" },
  { sid: "STD 5", pos: "8", action: "Reference", od: "0.121584", conc: "0.201", ref: "0.2" },
  { sid: "BK", pos: "9", action: "Ignore", od: "0.002909", conc: "0.009", ref: "" },
  { sid: "BK", pos: "10", action: "Ignore", od: "0.000701", conc: "0.006", ref: "", selected: true },
];

const railItems = [
  { label: "Edit SID", icon: <EditSidIcon /> },
  { label: "Edit Action", icon: <EditTargetIcon /> },
  { label: "Edit Weight", icon: <EditTargetIcon /> },
  { label: "Edit Dilution", icon: <DilutionIcon /> },
  { label: "Remove workplan", icon: <RemoveDocIcon /> },
  { label: "View calibration", icon: <EyeTargetIcon /> },
  { label: "View method", icon: <MethodIcon /> },
  { label: "Export LIMS", icon: <LimsIcon /> },
  { label: "Export result", icon: <ExportIcon /> },
  { label: "Print", icon: <PrintIcon /> },
  { label: "Close", icon: <CloseIcon /> },
];

export default function App() {
  return (
    <Page>
      <GlobalStyle />
      <GradDefs>
        <defs>
          <linearGradient id="blueGrad" x1="0" y1="0" x2="1" y2="1">
            <stop offset="0" stopColor="#3f6cbf" />
            <stop offset="1" stopColor="#27467f" />
          </linearGradient>
        </defs>
      </GradDefs>

      <TopBar>
        <TopIcons>
          <PowerIcon />
          <MinimizeIcon />
          <WindowsIcon />
          <TeamViewerIcon />
        </TopIcons>
        <Title>Routine &gt; Workplan results</Title>
        <AdmGroup>
          <AdmLabel>ADM</AdmLabel>
          <ExitIcon />
        </AdmGroup>
      </TopBar>

      <Body>
        <LeftPane>
          <NavGrid>
            {navItems.map((n) => (
              <React.Fragment key={n.label}>
                <NavTab $active={n.active}>
                  <NavIconSlot>{n.icon}</NavIconSlot>
                  <NavLabel>{n.label}</NavLabel>
                </NavTab>
                <SubItem $active={n.active}>
                  <SubIcon $active={n.active}>{n.subIcon}</SubIcon>
                  {n.sub}
                </SubItem>
              </React.Fragment>
            ))}
          </NavGrid>
          <Brand>
            <FuturaLogo />
            <BrandName>Futura</BrandName>
          </Brand>
          <RunBar>
            <RunButton>
              <PlayIcon />
            </RunButton>
            <RunButton>
              <StopIcon />
            </RunButton>
          </RunBar>
        </LeftPane>

        <Divider />

        <Main>
          <Tabs>
            <Tab $w={200}>Results by test</Tab>
            <Tab $w={235}>Results by sample</Tab>
            <Tab $w={90} $short>T-N</Tab>
            <Tab $w={85} $short $active>T-P</Tab>
            <Tab $w={146}>All charts</Tab>
            <TabFill>
              <ChatIcon />
            </TabFill>
          </Tabs>
          <Content>
            <ResultTable>
              <HeadRow>
                {headers.map((h) => (
                  <HeadCell key={h}>{h}</HeadCell>
                ))}
              </HeadRow>
              {rows.map((r, i) => {
                const accent = r.selected ? "#fff" : BLUE;
                const isBlank = r.sid === "BK";
                const tag = r.selected ? "#eee" : undefined;
                return (
                  <Row key={r.pos} $selected={r.selected} $alt={i % 2 === 1}>
                    <Cell $tone={accent} $bold>
                      {r.sid}
                      <CornerTag $bold $tone={tag}>ABC</CornerTag>
                    </Cell>
                    <Cell>{r.pos}</Cell>
                    <Cell>T-P</Cell>
                    <Cell $align="flex-end" $pad={11} $tone={accent} $bold>
                      {r.action}
                      <DropCaret $tone={r.selected ? "#fff" : undefined} />
                    </Cell>
                    <Cell>{r.od}</Cell>
                    <Cell $tone={isBlank ? "#aaa" : undefined}>{r.conc}</Cell>
                    <Cell $align="flex-end" $pad={20} $tone={BLUE}>
                      {r.ref}
                      {r.ref && <CornerTag>123</CornerTag>}
                    </Cell>
                    <Cell $align="flex-end" $pad={13} $tone={r.selected ? "#fff" : isBlank ? BLUE : "#777"} $bold>
                      1
                      {isBlank && <CornerTag $tone={tag}>123</CornerTag>}
                    </Cell>
                    <Cell $align="flex-end" $pad={13} $tone={r.selected ? "#fff" : isBlank ? BLUE : "#777"} $bold>
                      1
                      {isBlank && <CornerTag $tone={tag}>123</CornerTag>}
                    </Cell>
                  </Row>
                );
              })}
              <VScrollThumb />
            </ResultTable>
            <HScroll>
              {headers.map((h) => (
                <HScrollCell key={h} />
              ))}
              <HThumb />
              <HCorner />
            </HScroll>

            <ChartTools>
              <ToolGroup $gap={3.5}>
                <ZoomIcon mark="+" letter="X" />
                <ZoomIcon mark="-" letter="X" />
                <ZoomIcon mark="+" letter="Y" />
                <ZoomIcon mark="-" letter="Y" dark />
                <ZoomIcon letter="R" />
                <LinkedZoomIcon />
                <SortZoomIcon />
              </ToolGroup>
              <ToolGroup $gap={5} $ml={77}>
                <SeriesName>T-P</SeriesName>
                <SeriesButton>1</SeriesButton>
                <SeriesButton $on>2</SeriesButton>
                <GearsButton />
              </ToolGroup>
              <ToolSlot $ml={95}>
                <CrosshairIcon />
              </ToolSlot>
              <ToolSlot $ml={22}>
                <InfoIcon />
              </ToolSlot>
              <ToolSlot $ml={21}>
                <PanIcon />
              </ToolSlot>
              <ToolSlot $ml={7}>
                <SearchIcon />
              </ToolSlot>
              <ToolSlot $ml={3}>
                <ExpandIcon />
              </ToolSlot>
            </ChartTools>
            <ChartBox>
              <OdChart />
            </ChartBox>
          </Content>
        </Main>

        <FilterPane>
          <FilterHead>
            <FilterTitle>Filters</FilterTitle>
            <Chevron />
          </FilterHead>
          <FilterRow>
            From
            <FilterValue>02/21/2020</FilterValue>
          </FilterRow>
          <FilterRow>
            To
            <FilterValue>Last</FilterValue>
          </FilterRow>
          <DateSelect>
            02/21/2020
            <Chevron />
          </DateSelect>
          <PlanItem>TN TP MDL test 1</PlanItem>
          <FilterSpacer />
          <HideRow>
            Hide Aborted
            <CheckOutline />
          </HideRow>
        </FilterPane>

        <Divider />

        <RightRail>
          {railItems.map((r) => (
            <RailButton key={r.label}>
              <RailIcon>{r.icon}</RailIcon>
              <RailLabel>{r.label}</RailLabel>
            </RailButton>
          ))}
          <RailSpacer />
          <WideButton>
            <RailIcon>
              <WideIcon />
            </RailIcon>
            <RailLabel>Widescreen</RailLabel>
          </WideButton>
        </RightRail>
      </Body>

      <BottomBar>
        02-03-2020
        <Clock>17:35</Clock>
        :03
      </BottomBar>
    </Page>
  );
}
